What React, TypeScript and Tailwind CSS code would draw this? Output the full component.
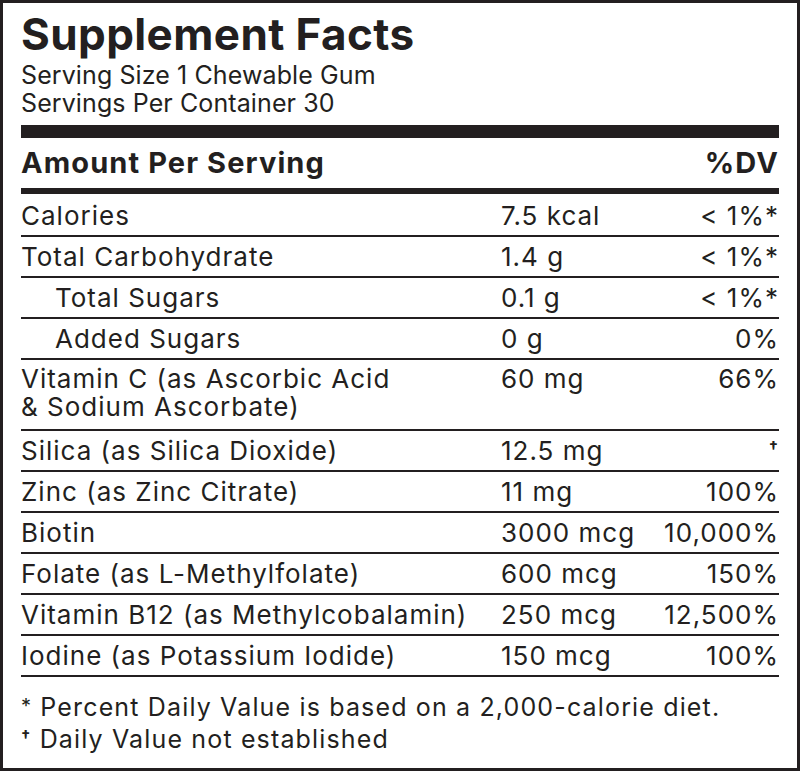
import React from "react";

type Row = { name: string[]; amt: string; dv: React.ReactNode; indent?: boolean };

const Star = () => <span>*</span>;
const Dagger = () => (
  <span className="text-[16px] font-bold align-top relative top-[-3px]">†</span>
);
const rows: Row[] = [
  { name: ["Calories"], amt: "7.5 kcal", dv: <>&lt; 1%<Star /></> },
  { name: ["Total Carbohydrate"], amt: "1.4 g", dv: <>&lt; 1%<Star /></> },
  { name: ["Total Sugars"], amt: "0.1 g", dv: <>&lt; 1%<Star /></>, indent: true },
  { name: ["Added Sugars"], amt: "0 g", dv: "0%", indent: true },
  { name: ["Vitamin C (as Ascorbic Acid", "& Sodium Ascorbate)"], amt: "60 mg", dv: "66%" },
  { name: ["Silica (as Silica Dioxide)"], amt: "12.5 mg", dv: <Dagger /> },
  { name: ["Zinc (as Zinc Citrate)"], amt: "11 mg", dv: "100%" },
  { name: ["Biotin"], amt: "3000 mcg", dv: "10,000%" },
  { name: ["Folate (as L-Methylfolate)"], amt: "600 mcg", dv: "150%" },
  { name: ["Vitamin B12 (as Methylcobalamin)"], amt: "250 mcg", dv: "12,500%" },
  { name: ["Iodine (as Potassium Iodide)"], amt: "150 mcg", dv: "100%" },
];

export default function App() {
  return (
    <div
      className="w-[800px] h-[771px] bg-white border-[3px] border-[#231f20] text-[#231f20] px-[18px] pt-[4px] flex flex-col"
      style={{ fontFamily: "Inter, 'Noto Sans', sans-serif" }}
    >
      <div className="text-[44px] font-bold leading-[54px] tracking-[0.4px]">Supplement Facts</div>
      <div className="text-[25px] leading-[28px] tracking-[0.1px]">Serving Size 1 Chewable Gum</div>
      <div className="text-[25px] leading-[28px] tracking-[0.1px]">Servings Per Container 30</div>
      <div className="h-[13px] bg-[#231f20] mt-[8px]" />
      <div className="flex justify-between items-center h-[50px] text-[29px] font-bold tracking-[1.1px]">
        <span>Amount Per Serving</span>
        <span>%DV</span>
      </div>
      <div className="h-[6px] bg-[#231f20]" />
      {rows.map((r, i) => {
        const multi = r.name.length > 1;
        const pad =
          i === 0
            ? "pt-[6px] pb-[4px] leading-[31px]"
            : multi
            ? "pt-[5px] pb-[8px] leading-[28px]"
            : "py-[4px] leading-[31px]";
        return (
          <div
            key={i}
            className={`flex border-b-2 border-[#231f20] text-[26px] tracking-[1px] ${pad}`}
          >
            <div className={`w-[480px] ${r.indent ? "pl-[34px]" : ""}`}>
              {r.name.map((n, j) => (
                <div key={j}>{n}</div>
              ))}
            </div>
            <div className="flex-1">{r.amt}</div>
            <div className="text-right">{r.dv}</div>
          </div>
        );
      })}
      <div className="pt-[14px] text-[25px] leading-[32px] tracking-[1.15px]">
        <div>
          <span className="text-[20px] align-top relative top-[-1px]">*</span> Percent Daily Value is based on a 2,000-calorie diet.
        </div>
        <div>
          <Dagger /> Daily Value not established
        </div>
      </div>
    </div>
  );
}
